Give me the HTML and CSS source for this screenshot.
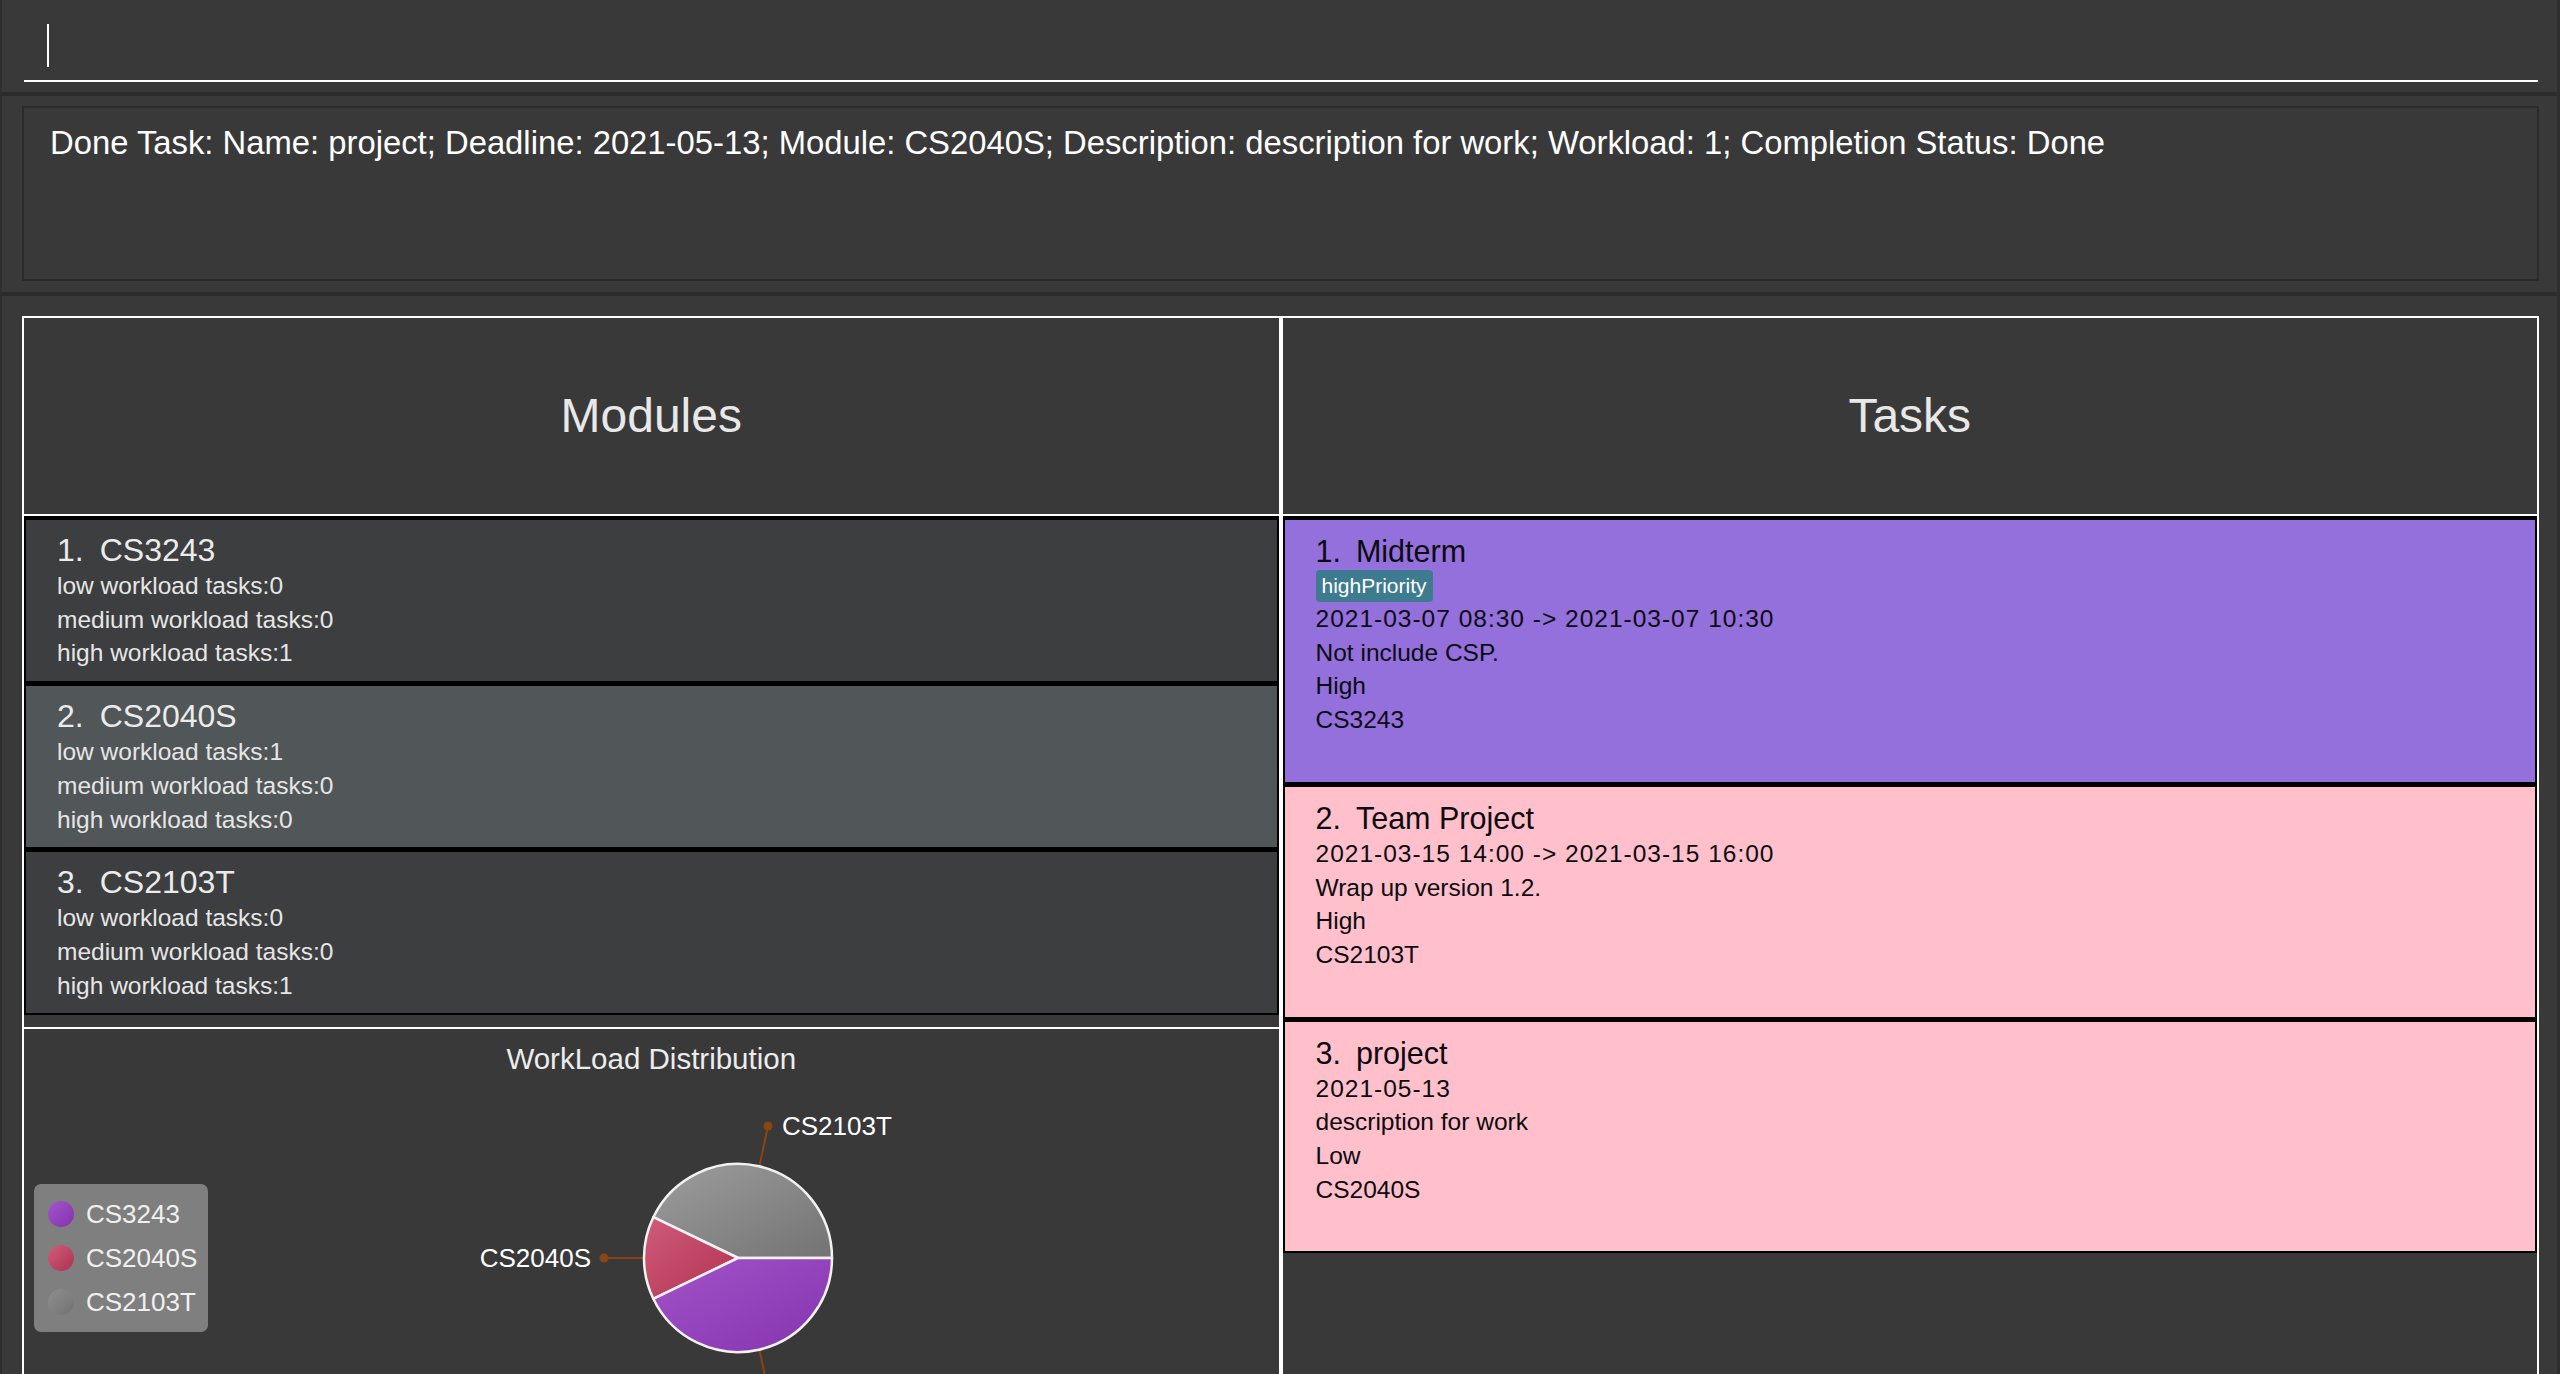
FILE: index.html
```html
<!DOCTYPE html>
<html lang="en">
<head>
<meta charset="utf-8">
<title>Module Planner</title>
<link rel="stylesheet" href="styles.css">
</head>
<body>
<div class="app">
  <header class="command">
    <div class="command-field"><span class="caret"></span></div>
  </header>
  <div class="divider"></div>
  <section class="result">
    <div class="result-box">
      <p class="result-text">Done Task: Name: project; Deadline: 2021-05-13; Module: CS2040S; Description: description for work; Workload: 1; Completion Status: Done</p>
    </div>
  </section>
  <div class="divider"></div>
  <main class="main">
    <section class="panel">
      <div class="panel-header"><h2>Modules</h2></div>
      <ul class="card-list">
        <li class="module-card even">
          <div class="module-title"><span>1.</span><span>CS3243</span></div>
          <div class="module-line">low workload tasks:0</div>
          <div class="module-line">medium workload tasks:0</div>
          <div class="module-line">high workload tasks:1</div>
        </li>
        <li class="module-card odd">
          <div class="module-title"><span>2.</span><span>CS2040S</span></div>
          <div class="module-line">low workload tasks:1</div>
          <div class="module-line">medium workload tasks:0</div>
          <div class="module-line">high workload tasks:0</div>
        </li>
        <li class="module-card even">
          <div class="module-title"><span>3.</span><span>CS2103T</span></div>
          <div class="module-line">low workload tasks:0</div>
          <div class="module-line">medium workload tasks:0</div>
          <div class="module-line">high workload tasks:1</div>
        </li>
      </ul>
      <div class="chart">
        <h3 class="chart-title">WorkLoad Distribution</h3>
        <div class="chart-body">
          <ul class="legend">
            <li class="legend-item"><span class="swatch swatch-purple"></span>CS3243</li>
            <li class="legend-item"><span class="swatch swatch-red"></span>CS2040S</li>
            <li class="legend-item"><span class="swatch swatch-gray"></span>CS2103T</li>
          </ul>
          <svg class="pie" viewBox="0 0 1070 362" xmlns="http://www.w3.org/2000/svg">
            <defs>
              <linearGradient id="g-gray" x1="0" y1="0" x2="1" y2="1">
                <stop offset="0" stop-color="#9d9d9d"/>
                <stop offset="1" stop-color="#737373"/>
              </linearGradient>
              <linearGradient id="g-red" x1="0" y1="0" x2="1" y2="1">
                <stop offset="0" stop-color="#cf5b7b"/>
                <stop offset="1" stop-color="#b0334f"/>
              </linearGradient>
              <linearGradient id="g-purple" x1="0" y1="0" x2="1" y2="1">
                <stop offset="0" stop-color="#a354c9"/>
                <stop offset="1" stop-color="#8433ae"/>
              </linearGradient>
            </defs>
            <g class="leaders">
              <line x1="551.5" y1="89" x2="560" y2="49"/>
              <circle cx="560" cy="49" r="4.5"/>
              <line x1="436" y1="181" x2="396" y2="181"/>
              <circle cx="396" cy="181" r="4.5"/>
              <line x1="551.5" y1="273" x2="560" y2="313"/>
            </g>
            <g class="slices">
              <path d="M530 181 L624 181 A94 94 0 0 0 445.3 140.2 Z" fill="url(#g-gray)"/>
              <path d="M530 181 L445.3 140.2 A94 94 0 0 0 445.3 221.8 Z" fill="url(#g-red)"/>
              <path d="M530 181 L445.3 221.8 A94 94 0 0 0 624 181 Z" fill="url(#g-purple)"/>
            </g>
            <text class="pie-label" x="574" y="58">CS2103T</text>
            <text class="pie-label" x="383" y="190" text-anchor="end">CS2040S</text>
          </svg>
        </div>
      </div>
    </section>
    <section class="panel">
      <div class="panel-header"><h2>Tasks</h2></div>
      <ul class="card-list">
        <li class="task-card purple">
          <div class="task-title"><span>1.</span><span>Midterm</span></div>
          <div class="tags"><span class="tag">highPriority</span></div>
          <div class="task-line when">2021-03-07 08:30 -&gt; 2021-03-07 10:30</div>
          <div class="task-line">Not include CSP.</div>
          <div class="task-line">High</div>
          <div class="task-line">CS3243</div>
        </li>
        <li class="task-card pink">
          <div class="task-title"><span>2.</span><span>Team Project</span></div>
          <div class="task-line when">2021-03-15 14:00 -&gt; 2021-03-15 16:00</div>
          <div class="task-line">Wrap up version 1.2.</div>
          <div class="task-line">High</div>
          <div class="task-line">CS2103T</div>
        </li>
        <li class="task-card pink">
          <div class="task-title"><span>3.</span><span>project</span></div>
          <div class="task-line when">2021-05-13</div>
          <div class="task-line">description for work</div>
          <div class="task-line">Low</div>
          <div class="task-line">CS2040S</div>
        </li>
      </ul>
    </section>
  </main>
</div>
</body>
</html>
```

FILE: styles.css
```css
* {
  box-sizing: border-box;
}

html,
body {
  margin: 0;
  padding: 0;
}

body {
  width: 2560px;
  height: 1374px;
  overflow: hidden;
  background: #393939;
  font-family: "Liberation Sans", Arial, sans-serif;
}

.app {
  height: 1374px;
  display: flex;
  flex-direction: column;
  border-left: 2px solid #2e2e2e;
  border-right: 3px solid #2e2e2e;
}

/* command box */
.command {
  flex: none;
  height: 92px;
  padding: 0 19px 0 22px;
}

.command-field {
  height: 82px;
  padding: 24px 0 0 23px;
  border-bottom: 2px solid #ffffff;
}

.caret {
  display: block;
  width: 2px;
  height: 43px;
  background: #ffffff;
}

.divider {
  flex: none;
  height: 4px;
  background: #2b2b2b;
}

/* result display */
.result {
  flex: none;
  height: 196px;
  padding: 10px 18px 0 20px;
}

.result-box {
  height: 175px;
  border: 2px solid #2b2b2b;
  padding: 15px 26px 0;
}

.result-text {
  margin: 0;
  color: #ffffff;
  font-size: 32.8px;
  line-height: 40px;
  white-space: nowrap;
}

/* main area */
.main {
  flex: 1;
  min-height: 0;
  padding: 20px 18px 0 20px;
  display: grid;
  grid-template-columns: 1fr 1fr;
}

.panel {
  border: 2px solid #ffffff;
  border-bottom: none;
  overflow: hidden;
  min-height: 0;
}

.panel-header {
  height: 198px;
  border-bottom: 2px solid #ffffff;
  display: flex;
  align-items: center;
  justify-content: center;
}

.panel-header h2 {
  margin: 0;
  font-size: 48px;
  line-height: 48px;
  font-weight: normal;
  color: #e8e8e8;
}

.card-list {
  list-style: none;
  margin: 0;
  padding: 2px 0 0;
  background: #000000;
  display: flex;
  flex-direction: column;
  gap: 1px;
}

/* module cards */
.module-card {
  border: 2px solid #000000;
  padding: 11px 31px 11px;
  color: #e6e6e6;
}

.module-card.even {
  background: #3c3e3f;
}

.module-card.odd {
  background: #515658;
}

.module-title {
  display: flex;
  gap: 16px;
  font-size: 32px;
  line-height: 38px;
  color: #ebebeb;
}

.module-line {
  font-size: 24.5px;
  line-height: 33.7px;
}

/* task cards */
.task-card {
  border: 2px solid #000000;
  padding: 12px 31px 45px;
  color: #0b0b10;
}

.task-card.purple {
  background: #9370db;
}

.task-card.pink {
  background: #ffc0cb;
}

.task-title {
  display: flex;
  gap: 15px;
  font-size: 30.5px;
  line-height: 38px;
}

.tags {
  height: 32px;
}

.tag {
  display: inline-block;
  height: 32px;
  line-height: 32px;
  padding: 0 6px;
  border-radius: 4px;
  background: #3e7b91;
  color: #ffffff;
  font-size: 21px;
}

.task-line {
  font-size: 24.5px;
  line-height: 33.7px;
}

.task-line.when {
  letter-spacing: 1px;
}

/* chart */
.chart {
  margin-top: 12px;
  border-top: 2px solid #ffffff;
}

.chart-title {
  margin: 0;
  padding-top: 12px;
  text-align: center;
  font-size: 29.5px;
  line-height: 36px;
  font-weight: normal;
  color: #ececec;
}

.chart-body {
  height: 362px;
  display: flex;
  align-items: center;
}

.legend {
  flex: none;
  list-style: none;
  margin: 0 0 0 10px;
  padding: 8px 12px 8px 14px;
  width: 174px;
  background: #7f7f7f;
  border-radius: 7px;
}

.legend-item {
  height: 44px;
  display: flex;
  align-items: center;
  gap: 12px;
  font-size: 26px;
  color: #f0f0f0;
}

.swatch {
  flex: none;
  width: 26px;
  height: 26px;
  border-radius: 50%;
}

.swatch-purple {
  background: linear-gradient(135deg, #a556cb, #8231ac);
}

.swatch-red {
  background: linear-gradient(135deg, #d05d7c, #ad324e);
}

.swatch-gray {
  background: linear-gradient(135deg, #8e8e8e, #727272);
}

.pie {
  flex: none;
  width: 1070px;
  height: 362px;
}

.slices path {
  stroke: #f2f2f2;
  stroke-width: 2.5;
  stroke-linejoin: round;
}

.leaders line {
  stroke: #8b4513;
  stroke-width: 2;
}

.leaders circle {
  fill: #8b4513;
}

.pie-label {
  font-family: "Liberation Sans", Arial, sans-serif;
  font-size: 26px;
  fill: #ffffff;
}
```
